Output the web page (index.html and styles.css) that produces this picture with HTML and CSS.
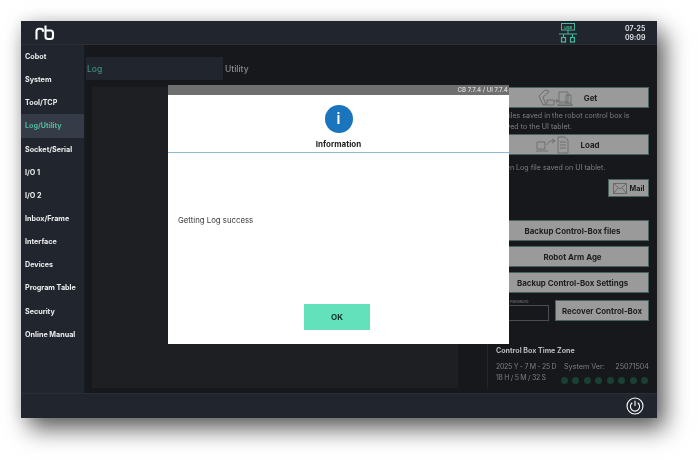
FILE: index.html
```html
<!DOCTYPE html>
<html lang="en">
<head>
<meta charset="utf-8">
<title>Log / Utility</title>
<link rel="stylesheet" href="styles.css">
</head>
<body>
<div class="window">
  <header class="topbar">
    <svg class="logo" width="20" height="16" viewBox="0 0 20 16"><path d="M1.500 14.500V6.500Q1.500 3.800 4.200 3.800H5.500Q8 3.800 8 6V6.800M10.500 .5V11.500Q10.500 14 13 14H15.500Q18 14 18 11.500V8Q18 5.500 15.500 5.500H10.500" fill="none" stroke="#fff" stroke-width="2.100"/></svg>
    <svg class="net" width="20" height="20" viewBox="0 0 20 20" fill="none" stroke="#45b79b"><rect x="3.500" y="0.500" width="13" height="6.500"/><text x="10" y="5.800" class="usb" text-anchor="middle">USB</text><path d="M10 7V11M1 11H19M5.500 11V14M14.500 11V14"/><rect x="3.500" y="14.500" width="4" height="4.500" stroke-width="1.200"/><rect x="12.500" y="14.500" width="4" height="4.500" stroke-width="1.200"/></svg>
    <div class="clock"><span>07-25</span><span>09:09</span></div>
  </header>

  <div class="main">
    <nav class="sidebar">
      <a class="nav">Cobot</a>
      <a class="nav">System</a>
      <a class="nav">Tool/TCP</a>
      <a class="nav active">Log/Utility</a>
      <a class="nav">Socket/Serial</a>
      <a class="nav">I/O 1</a>
      <a class="nav">I/O 2</a>
      <a class="nav">Inbox/Frame</a>
      <a class="nav">Interface</a>
      <a class="nav">Devices</a>
      <a class="nav">Program Table</a>
      <a class="nav">Security</a>
      <a class="nav">Online Manual</a>
    </nav>

    <section class="content">
      <div class="tabs">
        <div class="tab tab-on">Log</div>
        <div class="tab">Utility</div>
      </div>
      <div class="panes">
        <div class="logpane"></div>
        <div class="tools">
          <button class="btn icon-btn">
            <svg width="35" height="18" viewBox="0 0 35 18" fill="none" stroke="#5b5f5e" stroke-width=".7"><path d="M7 1 1 7l4 9h3L5 8l5-4 1-2zM9 11h7v5H9zM16 12h4M18 10l2.500 2-2.500 2"/><path d="M21 3h9v10h-9zM28 6h5v8h-5zM20 15h14v1.500H20z"/></svg>
            <span class="btn-label">Get</span>
          </button>
          <p class="note n1">All files saved in the robot control box is<br>moved to the UI tablet.</p>
          <button class="btn icon-btn">
            <svg width="34" height="18" viewBox="0 0 34 18" fill="none" stroke="#5b5f5e" stroke-width=".7"><path d="M1 6h8v7H1zM0 15h12M11 9q2-5 7-4M16 3l3 2-3 2"/><path d="M22 1h7l3 3v13H22zM24 6h6M24 9h6M24 12h6"/></svg>
            <span class="btn-label">Load</span>
          </button>
          <p class="note n2">Open Log file saved on UI tablet.</p>
          <button class="btn mail">
            <svg width="14" height="11" viewBox="0 0 14 11" fill="none" stroke="#5b5f5e" stroke-width=".8"><path d="M.5.5h13v10H.5zM.5.5 7 6l6.500-5.500M.5 10.500 5 5M13.500 10.500 9 5"/></svg>
            <span>Mail</span>
          </button>
          <button class="btn wide first">Backup Control-Box files</button>
          <button class="btn wide">Robot Arm Age</button>
          <button class="btn wide">Backup Control-Box Settings</button>
          <div class="recover">
            <label class="pw"><span class="pw-label">Password</span><span class="pw-box"></span></label>
            <button class="btn rec">Recover Control-Box</button>
          </div>
          <h3 class="zone">Control Box Time Zone</h3>
          <div class="status">
            <div class="date"><div>2025 Y - 7 M - 25 D</div><div>18 H / 5 M / 32 S</div></div>
            <div class="sys">
              <div class="ver"><span>System Ver:</span><span>25071504</span></div>
              <div class="dots"><i></i><i></i><i></i><i></i><i></i><i></i><i></i><i></i></div>
            </div>
          </div>
        </div>
      </div>
    </section>
  </div>

  <footer class="bottombar">
    <svg width="18" height="18" viewBox="0 0 18 18" fill="none" stroke="#fff" stroke-width="1.100"><circle cx="9" cy="9" r="8"/><path d="M6.300 5.800a4.600 4.600 0 1 0 5.400 0M9 3.800V9"/></svg>
  </footer>

  <div class="modal">
    <div class="modal-bar">CB 7.7.4 / UI 7.7.4</div>
    <div class="modal-head">
      <div class="info">i</div>
      <div class="modal-title">Information</div>
    </div>
    <div class="modal-body">
      <p class="msg">Getting Log success</p>
      <button class="ok">OK</button>
    </div>
  </div>
</div>
</body>
</html>
```

FILE: styles.css
```css
* { box-sizing: border-box; }
html, body { margin: 0; height: 100%; background: #fff; overflow: hidden; }
body { padding: 21px 42px 42px 21px; font-family: Inter, "Noto Sans", sans-serif; }

.window {
  position: relative;
  width: 636px;
  height: 397px;
  display: flex;
  flex-direction: column;
  background: #17181c;
  box-shadow: 8px 11px 22px rgba(0,0,0,.62), 0 0 16px rgba(0,0,0,.12);
  filter: blur(.5px);
}

.topbar {
  height: 24px;
  flex: none;
  display: flex;
  align-items: center;
  background: #21252e;
  border-bottom: 1px solid #2b2f38;
  padding-left: 14px;
}
.logo { flex: none; }
.net { margin-left: auto; flex: none; }
.usb { font-size: 4px; fill: #45b79b; stroke: none; font-weight: 600; }
.clock {
  width: 79px;
  padding-left: 47px;
  display: flex;
  flex-direction: column;
  font-size: 7px;
  line-height: 9px;
  font-weight: 600;
  color: #e6e7e8;
  flex: none;
}

.main { flex: 1; min-height: 0; display: flex; }

.sidebar {
  width: 64px;
  flex: none;
  background: #21252e;
  border-right: 1px solid #1b1d22;
  display: flex;
  flex-direction: column;
}
.nav {
  height: 23.150px;
  display: flex;
  align-items: center;
  padding-left: 4px;
  font-size: 7.200px;
  font-weight: 700;
  color: #eceded;
  white-space: nowrap;
}
.nav.active { background: #363c47; color: #52b69c; }

.content { flex: 1; min-width: 0; display: flex; flex-direction: column; padding: 12px 0 5px; }
.tabs { display: flex; height: 23px; flex: none; padding-left: 1px; }
.tab {
  display: flex;
  align-items: center;
  padding-left: 1px;
  font-size: 8.500px;
  font-weight: 500;
  color: #8a8d8f;
}
.tab-on { width: 137px; background: #21252e; color: #3f8f7c; margin-right: 1px; }

.panes { flex: 1; min-height: 0; display: flex; margin-top: 7px; padding-left: 7px; }
.logpane { width: 366px; flex: none; background: #1e1f23; }

.tools {
  width: 170px;
  flex: none;
  margin-left: 29px;
  padding: 0 8px;
  border-left: 1px solid #23252a;
  display: flex;
  flex-direction: column;
  align-items: stretch;
}
.btn {
  height: 21px;
  flex: none;
  padding: 0;
  display: flex;
  align-items: center;
  justify-content: center;
  background: #9a9a9a;
  border: 1px solid #46645d;
  font: 700 7.900px Inter, "Noto Sans", sans-serif;
  color: #1c1d1f;
}
.icon-btn { gap: 11px; padding-right: 10px; }
.note {
  margin: 0;
  font-size: 7.100px;
  line-height: 11px;
  color: #7d7f80;
  white-space: nowrap;
}
.n1 { height: 26px; padding-top: 2px; }
.n2 { height: 24px; padding-top: 7px; }
.mail { width: 41px; height: 18px; align-self: flex-end; gap: 3px; font-size: 7.200px; }
.wide { margin-bottom: 5px; }
.first { margin-top: 23px; }
.recover { display: flex; gap: 6px; align-items: flex-end; margin-top: 2px; height: 21px; }
.pw { flex: 1; display: flex; flex-direction: column; position: relative; height: 16px; }
.pw-label { position: absolute; left: 14px; top: -6px; font-size: 4px; color: #77797b; }
.pw-box { flex: 1; border: 1px solid #4a4c50; }
.rec { width: 94px; flex: none; }
.zone { margin: 24px 0 0; font-size: 7.100px; line-height: 11px; font-weight: 700; color: #b9babb; }
.status { display: flex; margin-top: 5px; font-size: 7.200px; color: #7d7f80; white-space: nowrap; }
.date { width: 65px; line-height: 11px; flex: none; font-size: 7px; letter-spacing: -.3px; }
.sys { flex: 1; min-width: 0; }
.ver { display: flex; justify-content: space-between; line-height: 11px; padding-left: 3px; }
.dots { display: flex; justify-content: space-between; margin-top: 5px; padding-right: 1px; }
.dots i { width: 7px; height: 7px; border-radius: 50%; background: #1a4034; }

.bottombar {
  height: 25px;
  flex: none;
  display: flex;
  align-items: center;
  justify-content: flex-end;
  padding-right: 13px;
  background: #21252e;
  border-top: 1px solid #2a2e37;
}

.modal {
  position: absolute;
  left: 147px;
  top: 64px;
  width: 341px;
  height: 259px;
  display: flex;
  flex-direction: column;
  background: #fff;
}
.modal-bar {
  height: 10px;
  flex: none;
  background: #6f6f6f;
  color: #d5d5d5;
  font-size: 6.200px;
  font-weight: 600;
  line-height: 10px;
  text-align: right;
  padding-right: 1px;
}
.modal-head {
  height: 58px;
  flex: none;
  display: flex;
  flex-direction: column;
  align-items: center;
  border-bottom: 1px solid #8dbad6;
  padding-top: 10px;
}
.info {
  width: 28px;
  height: 28px;
  border-radius: 50%;
  background: #1a75bd;
  color: #fff;
  font-size: 15px;
  font-weight: 600;
  line-height: 28px;
  text-align: center;
}
.modal-title { margin-top: 6px; font-size: 8px; line-height: 11px; font-weight: 700; color: #222; }
.modal-body { flex: 1; min-height: 0; display: flex; flex-direction: column; padding: 62px 10px 14px; }
.msg { margin: 0; font-size: 7.800px; line-height: 11px; color: #3a3a3a; }
.ok {
  margin: auto 0 0 126px;
  width: 66px;
  height: 26px;
  padding: 0;
  border: 0;
  background: #62e1bb;
  font: 700 8px Inter, "Noto Sans", sans-serif;
  color: #10302a;
}
```
